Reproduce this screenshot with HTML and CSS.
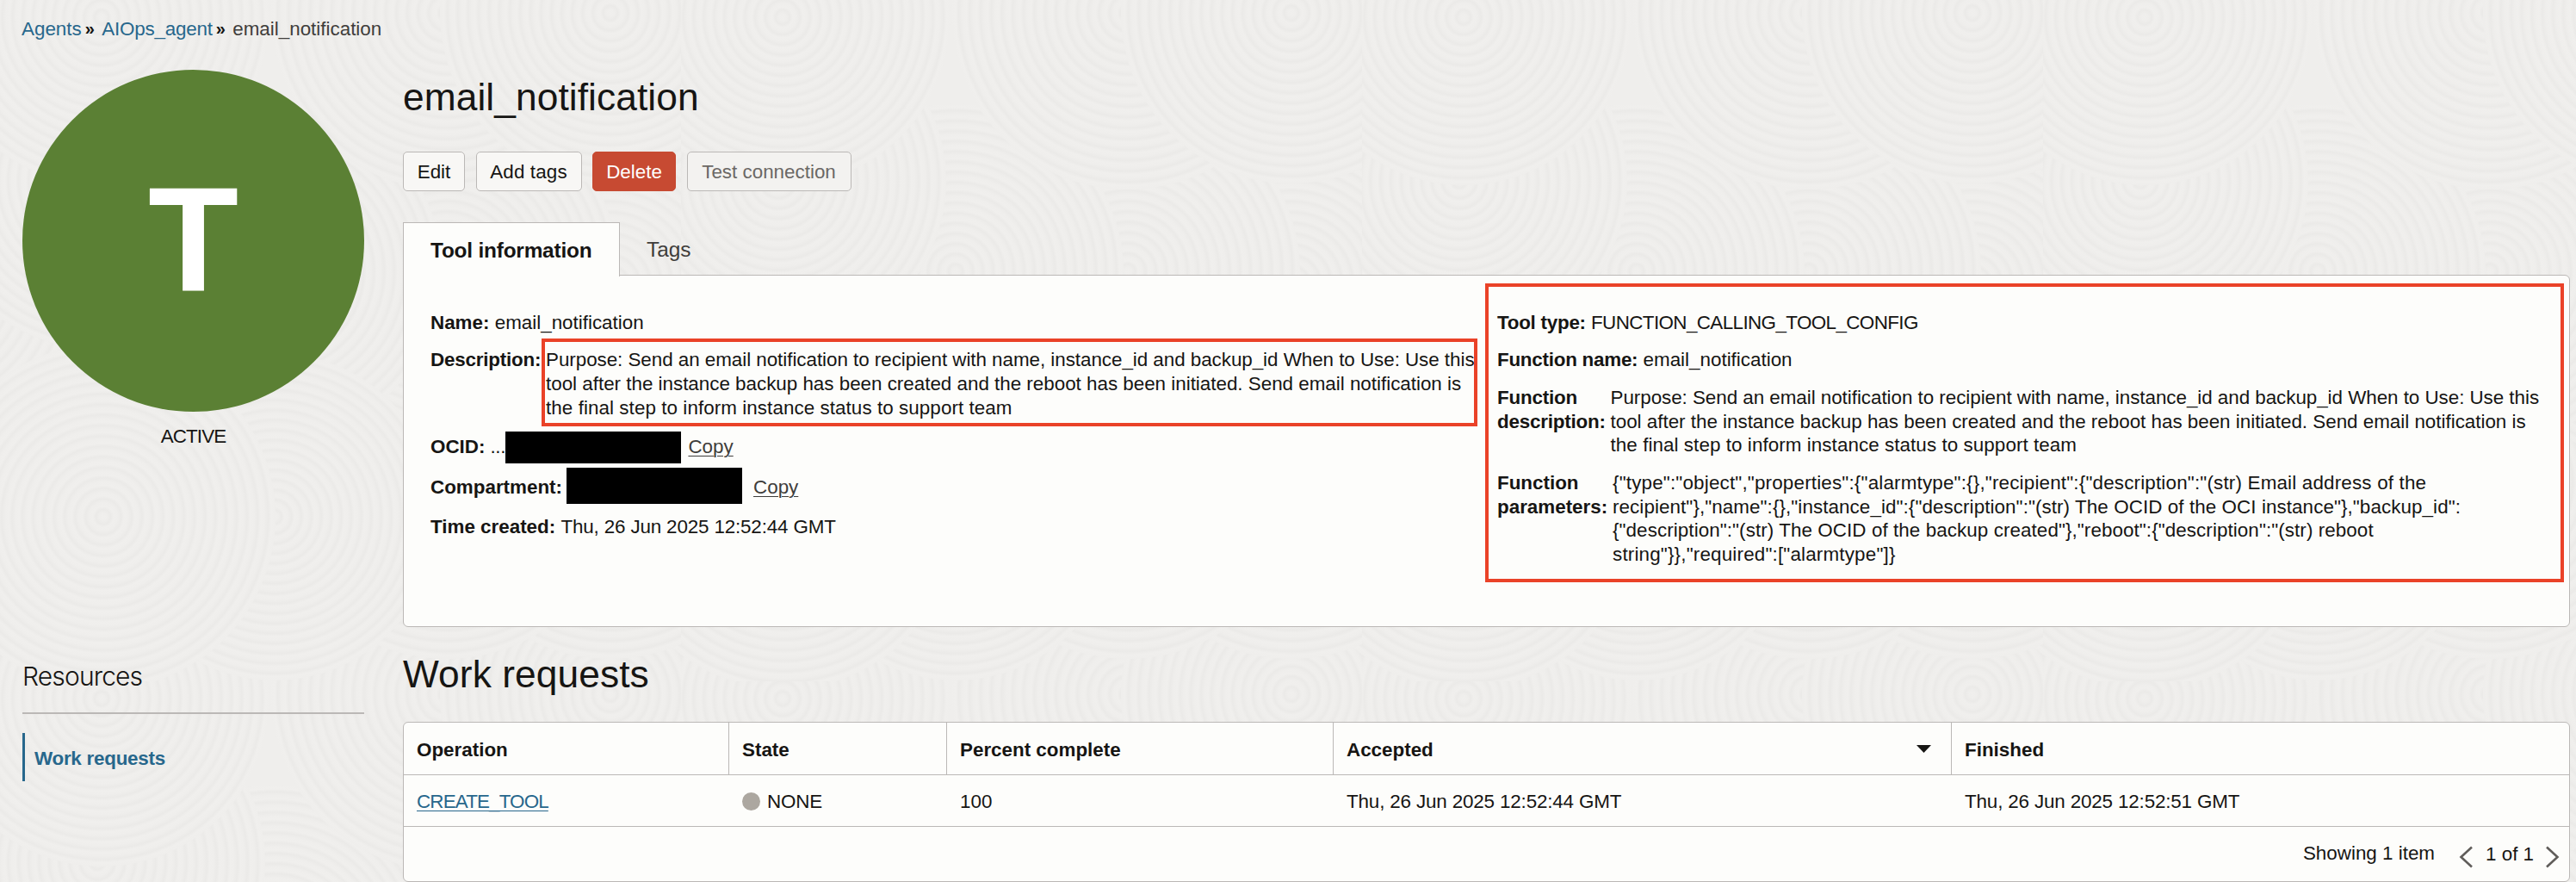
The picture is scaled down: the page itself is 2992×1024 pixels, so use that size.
FILE: index.html
```
<!DOCTYPE html>
<html lang="en">
<head>
<meta charset="utf-8">
<title>email_notification</title>
<link rel="stylesheet" href="styles.css">
</head>
<body>
<svg class="texture" aria-hidden="true">
  <defs>
    <radialGradient id="rings" cx=".5" cy=".5" r=".0305" spreadMethod="repeat">
      <stop offset="0" stop-color="#f0efed"/>
      <stop offset=".35" stop-color="#efeeec"/>
      <stop offset=".7" stop-color="#ebeae8"/>
      <stop offset="1" stop-color="#f0efed"/>
    </radialGradient>
    <g id="swirls" fill="url(#rings)">
      <circle cx="709" cy="560" r="205"/>
      <circle cx="519" cy="560" r="205"/>
      <circle cx="709" cy="330" r="205"/>
      <circle cx="519" cy="315" r="200"/>
      <circle cx="319" cy="315" r="195"/>
      <circle cx="113" cy="210" r="195"/>
      <circle cx="519" cy="15" r="205"/>
      <circle cx="709" cy="15" r="198"/>
      <circle cx="118" cy="20" r="195"/>
      <circle cx="319" cy="600" r="190"/>
      <circle cx="120" cy="600" r="200"/>
    </g>
    <pattern id="tile" width="791" height="791" patternUnits="userSpaceOnUse">
      <rect width="791" height="791" fill="#efeeec"/>
      <use href="#swirls" x="-791" y="-791"/>
      <use href="#swirls" y="-791"/>
      <use href="#swirls" x="-791" y="791"/>
      <use href="#swirls" y="791"/>
      <use href="#swirls" x="791"/>
      <use href="#swirls" x="-791"/>
      <use href="#swirls"/>
    </pattern>
  </defs>
  <rect width="100%" height="100%" fill="url(#tile)"/>
</svg>

<nav class="breadcrumb">
  <a href="#">Agents</a><span class="sep">»</span><a href="#" class="agent">AIOps_agent</a><span class="sep">»</span><span class="current">email_notification</span>
</nav>

<div class="page">
  <aside class="side">
    <div class="badge">T</div>
    <div class="status">ACTIVE</div>
    <h3 class="side-title">Resources</h3>
    <a class="side-link" href="#">Work requests</a>
  </aside>

  <main class="main">
    <h1 class="title">email_notification</h1>
    <div class="actions">
      <button class="btn edit">Edit</button>
      <button class="btn add">Add tags</button>
      <button class="btn danger">Delete</button>
      <button class="btn disabled">Test connection</button>
    </div>

    <div class="tabs">
      <div class="tab active">Tool information</div>
      <div class="tab">Tags</div>
    </div>

    <section class="panel">
      <div class="col left">
        <div class="row"><b>Name:</b> email_notification</div>
        <div class="row pair desc"><b>Description:</b><span class="prose">Purpose: Send an email notification to recipient with name, instance_id and backup_id When to Use: Use this<br><span class="second-line">tool after the instance backup has been created and the reboot has been initiated. Send email notification is</span><br><span class="third-line">the final step to inform instance status to support team</span></span></div>
        <div class="row pair ocid"><b>OCID:</b><span class="dots">...</span><span class="redacted short"></span><a class="copy" href="#">Copy</a></div>
        <div class="row pair comp"><b>Compartment:</b><span class="redacted tall"></span><a class="copy far" href="#">Copy</a></div>
        <div class="row time"><b>Time created:</b> <span class="date">Thu, 26 Jun 2025 12:52:44 GMT</span></div>
      </div>
      <div class="col right">
        <div class="row"><b class="tt">Tool type:</b> <span class="config">FUNCTION_CALLING_TOOL_CONFIG</span></div>
        <div class="row fname"><b class="fn">Function name:</b> email_notification</div>
        <div class="row pair fdesc"><b>Function<br>description:</b><span class="prose">Purpose: Send an email notification to recipient with name, instance_id and backup_id When to Use: Use this<br><span class="second-line">tool after the instance backup has been created and the reboot has been initiated. Send email notification is</span><br><span class="third-line">the final step to inform instance status to support team</span></span></div>
        <div class="row pair fparams"><b>Function<br>parameters:</b><span class="json"><span class="wide">{"type":"object","properties":{"alarmtype":{},"recipient":{"description":"(str) Email address of the</span><br>recipient"},"name":{},"instance_id":{"description":"(str) The OCID of the OCI instance"},"backup_id":<br>{"description":"(str) The OCID of the backup created"},"reboot":{"description":"(str) reboot<br><span class="wide">string"}},"required":["alarmtype"]}</span></span></div>
      </div>
      <div class="mark mark-left"></div>
      <div class="mark mark-right"></div>
    </section>

    <h2 class="title second">Work requests</h2>
    <div class="table">
      <div class="tr head">
        <div class="td">Operation</div>
        <div class="td">State</div>
        <div class="td">Percent complete</div>
        <div class="td sorted">Accepted<svg width="17" height="10" viewBox="0 0 17 10"><path d="M0 0h17L8.500 9z" fill="#161513"/></svg></div>
        <div class="td last">Finished</div>
      </div>
      <div class="tr">
        <div class="td"><a class="op" href="#">CREATE_TOOL</a></div>
        <div class="td state"><i class="dot"></i>NONE</div>
        <div class="td">100</div>
        <div class="td date">Thu, 26 Jun 2025 12:52:44 GMT</div>
        <div class="td date">Thu, 26 Jun 2025 12:52:51 GMT</div>
      </div>
      <div class="foot">
        <span>Showing 1 item</span>
        <svg class="prev" width="17" height="26" viewBox="0 0 17 26"><path d="M15 1.500L2.500 13L15 24.500" fill="none" stroke="#605d5a" stroke-width="2.600"/></svg>
        <span class="pages">1 of 1</span>
        <svg class="next" width="17" height="26" viewBox="0 0 17 26"><path d="M2 1.500L14.500 13L2 24.500" fill="none" stroke="#605d5a" stroke-width="2.600"/></svg>
      </div>
    </div>
  </main>
</div>
</body>
</html>
```
FILE: styles.css
```
* { box-sizing: border-box; }

body {
  margin: 0;
  height: 1024px;
  overflow: hidden;
  background: #f0efed;
  color: #161513;
  font: 22.4px/28px "Liberation Sans", Arial, sans-serif;
}

a { color: #27678c; text-decoration: none; }

.texture { position: absolute; inset: 0; width: 100%; height: 1024px; z-index: -1; }

.breadcrumb { display: flex; padding: 20px 0 0 25px; height: 80px; white-space: nowrap; }
.breadcrumb .sep { width: 23.500px; padding-left: 4px; font-weight: bold; font-size: 20px; line-height: 26px; }
.breadcrumb .agent { letter-spacing: -.2px; }
.breadcrumb .current { color: #3f3d3b; }

.page { display: flex; gap: 45px; padding: 0 7px 0 26px; }

.side { width: 397px; flex: none; }
.badge {
  width: 397px;
  height: 397px;
  margin-top: 1px;
  border-radius: 50%;
  background: #5b8034;
  color: #fff;
  font-size: 172px;
  font-weight: bold;
  line-height: 395px;
  text-align: center;
}
.status { margin-top: 15px; text-align: center; letter-spacing: -.9px; }
.side-title {
  margin: 246px 0 0;
  height: 62px;
  border-bottom: 2px solid #bbb8b6;
  font: 300 30px/36px Inter, "Liberation Sans", sans-serif;
  letter-spacing: -.85px;
}
.side-link {
  display: block;
  margin-top: 22px;
  height: 56px;
  padding: 16px 0 0 11px;
  border-left: 3px solid #27678c;
  font-weight: bold;
  letter-spacing: -.25px;
}

.main { width: 2517px; flex: none; }
.title { margin: 7px 0 0; height: 89px; font-size: 44.3px; line-height: 52px; font-weight: normal; letter-spacing: .08px; }

.actions { display: flex; height: 82px; gap: 12.500px; align-items: flex-start; }
.btn {
  height: 46px;
  padding: 1px 0 0;
  border: 1px solid #bbb8b6;
  border-radius: 5px;
  background: #f8f7f5;
  color: #161513;
  font: inherit;
}
.edit { width: 72px; }
.add { width: 123px; letter-spacing: .15px; }
.danger { width: 97px; border-color: #c74a32; background: #c74a32; color: #fff; }
.disabled { width: 191px; color: #6b6865; background: #f3f2f0; }

.tabs { display: flex; height: 61px; position: relative; z-index: 1; font-size: 24.4px; }
.tab { padding: 17px 31px 0; line-height: 30px; color: #3f3d3b; }
.tab.active {
  width: 252px;
  height: 63px;
  border: 1px solid #bbb8b6;
  border-bottom: 0;
  background: #fdfdfb;
  color: #161513;
  font-weight: bold;
  letter-spacing: -.2px;
  white-space: nowrap;
}

.panel {
  position: relative;
  display: flex;
  height: 409px;
  padding: 41px 0 0 31px;
  border: 1px solid #bbb8b6;
  border-radius: 0 6px 6px 6px;
  background: #fdfdfb;
  white-space: nowrap;
}
.left { width: 1239px; flex: none; }
.pair { display: flex; }
.prose { letter-spacing: -.04px; }
.second-line { letter-spacing: -.01px; }
.third-line { letter-spacing: .07px; }
.desc { margin-top: 15px; }
.desc b { width: 134px; letter-spacing: -.2px; }
.ocid { margin-top: 17px; height: 28px; }
.dots { margin-left: 6px; width: 18px; letter-spacing: -.3px; }
.redacted { width: 204px; background: #000; flex: none; }
.short { height: 37px; margin-top: -4px; }
.tall { height: 42px; margin: -9px 0 0 5px; }
.copy { margin-left: 8px; color: #3f3d3b; text-decoration: underline; text-decoration-thickness: 1px; text-underline-offset: 3px; }
.copy.far { margin-left: 13px; }
.comp { margin-top: 19px; height: 28px; }
.time { margin-top: 18px; }
.date { letter-spacing: -.15px; }

.right { line-height: 27.500px; }
.tt { letter-spacing: -.25px; }
.fn { letter-spacing: -.24px; }
.config { letter-spacing: -.6px; }
.fname { margin-top: 15.500px; }
.fdesc { margin-top: 16.500px; }
.fdesc b { width: 131.500px; letter-spacing: -.2px; }
.fparams { margin-top: 16.500px; }
.fparams b { width: 134px; }
.json { letter-spacing: .08px; }
.wide { letter-spacing: .18px; }

.mark { position: absolute; border: 4px solid #ea4228; }
.mark-left { left: 160px; top: 73px; width: 1087px; height: 102px; }
.mark-right { left: 1256px; top: 9px; width: 1253px; height: 347px; }

.second { margin-top: 29px; height: 82px; }

.table { height: 186px; margin-top: -1px; border: 1px solid #bbb8b6; border-radius: 6px; background: #fdfdfb; white-space: nowrap; }
.tr {
  display: grid;
  grid-template-columns: 378px 253px 449px 718px 1fr;
  height: 60px;
  border-bottom: 1px solid #bbb8b6;
}
.tr.head { height: 61px; font-weight: bold; }
.td { padding: 17px 0 0 15px; }
.head .td { padding-top: 18px; border-right: 1px solid #bbb8b6; }
.head .last { border-right: 0; }
.sorted { display: flex; justify-content: space-between; }
.sorted svg { margin: 8px 23px 0 0; }
.op { letter-spacing: -.85px; text-decoration: underline; text-decoration-thickness: 1px; text-underline-offset: 3px; }
.state { display: flex; letter-spacing: -.2px; }
.dot { width: 21px; height: 21px; margin: 3px 8px 0 0; border-radius: 50%; background: #aca7a0; }
.foot { display: flex; justify-content: flex-end; padding: 17px 11px 0 0; }
.prev { margin: 5px 0 0 28px; }
.pages { margin: 1px 0 0 14px; width: 56px; }
.next { margin: 5px 0 0 13px; }
```
